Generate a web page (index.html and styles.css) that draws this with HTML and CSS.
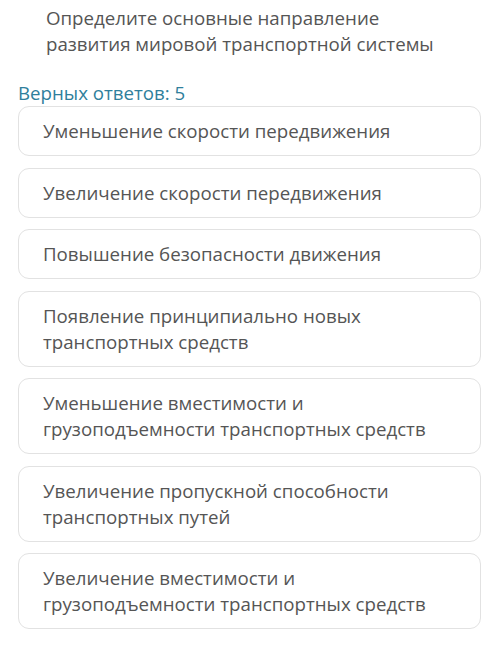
FILE: index.html
```html
<!DOCTYPE html>
<html lang="ru">
  <head>
    <meta charset="utf-8">
    <title>Вопрос</title>
    <link rel="stylesheet" href="styles.css">
  </head>
  <body>
    <div class="quiz">
      <p class="question">Определите основные направление развития мировой транспортной системы</p>
      <p class="answers-count">Верных ответов: 5</p>
      <div class="options">
        <div class="option">Уменьшение скорости передвижения</div>
        <div class="option">Увеличение скорости передвижения</div>
        <div class="option">Повышение безопасности движения</div>
        <div class="option">Появление принципиально новых транспортных средств</div>
        <div class="option">Уменьшение вместимости и грузоподъемности транспортных средств</div>
        <div class="option">Увеличение пропускной способности транспортных путей</div>
        <div class="option">Увеличение вместимости и грузоподъемности транспортных средств</div>
      </div>
    </div>
  </body>
</html>
```

FILE: styles.css
```css
body {
  margin: 0;
  background: #ffffff;
  font-family: "Open Sans", sans-serif;
}

.quiz {
  padding: 5px 19px 0 18px;
}

.question {
  margin: 0 0 0 28px;
  width: 400px;
  font-size: 18.7px;
  line-height: 26px;
  color: #555555;
}

.answers-count {
  margin: 23px 0 0 0;
  font-size: 18.7px;
  line-height: 26px;
  color: #2f7f9c;
}

.options {
  display: flex;
  flex-direction: column;
  gap: 11.5px;
}

.option {
  border: 1px solid #e2e2e2;
  border-radius: 11px;
  padding: 11px 40px 11px 24px;
  font-size: 18.7px;
  line-height: 26px;
  color: #555555;
}
```
